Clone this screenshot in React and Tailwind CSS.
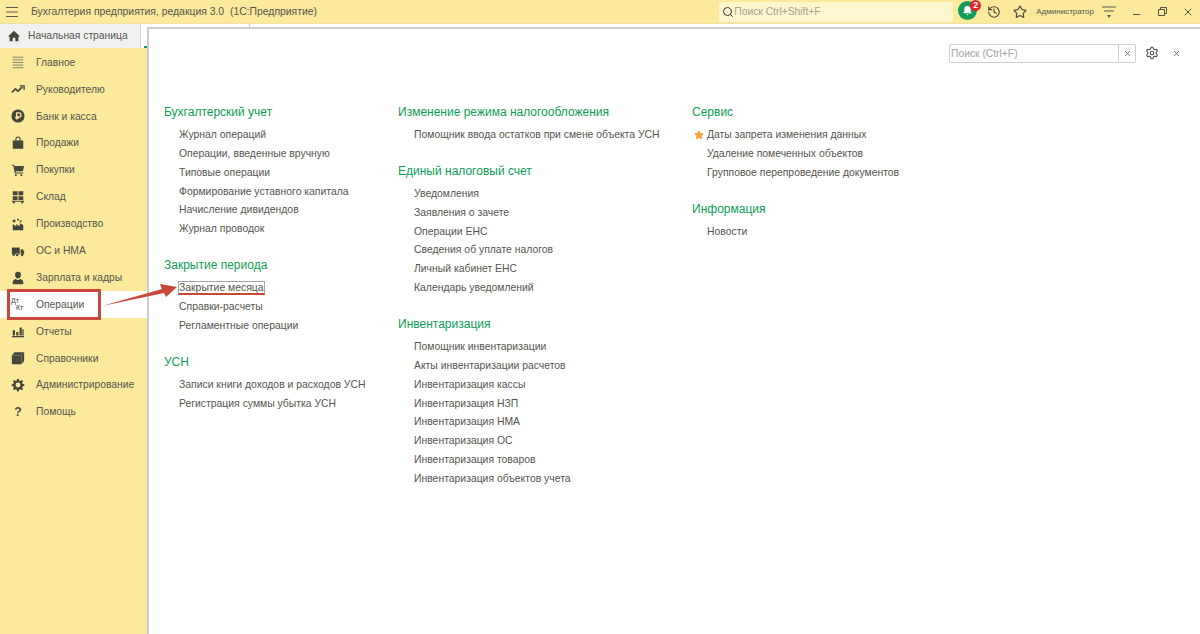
import { Search, History, Star, X, Settings } from "lucide-react"

const menu = [
  { label: "Главное", icon: "lines" },
  { label: "Руководителю", icon: "trend" },
  { label: "Банк и касса", icon: "rub" },
  { label: "Продажи", icon: "bag" },
  { label: "Покупки", icon: "cart" },
  { label: "Склад", icon: "stock" },
  { label: "Производство", icon: "factory" },
  { label: "ОС и НМА", icon: "truck" },
  { label: "Зарплата и кадры", icon: "user" },
  { label: "Операции", icon: "dtkt", active: true },
  { label: "Отчеты", icon: "bars" },
  { label: "Справочники", icon: "book" },
  { label: "Администрирование", icon: "gear" },
  { label: "Помощь", icon: "help" },
]

const columns = [
  {
    width: "w-[234px]",
    indent: "pl-[15px]",
    groups: [
      { title: "Бухгалтерский учет", items: ["Журнал операций", "Операции, введенные вручную", "Типовые операции", "Формирование уставного капитала", "Начисление дивидендов", "Журнал проводок"] },
      { title: "Закрытие периода", items: ["Закрытие месяца", "Справки-расчеты", "Регламентные операции"] },
      { title: "УСН", items: ["Записи книги доходов и расходов УСН", "Регистрация суммы убытка УСН"] },
    ],
  },
  {
    width: "w-[294px]",
    indent: "pl-[16px]",
    groups: [
      { title: "Изменение режима налогообложения", items: ["Помощник ввода остатков при смене объекта УСН"] },
      { title: "Единый налоговый счет", items: ["Уведомления", "Заявления о зачете", "Операции ЕНС", "Сведения об уплате налогов", "Личный кабинет ЕНС", "Календарь уведомлений"] },
      { title: "Инвентаризация", items: ["Помощник инвентаризации", "Акты инвентаризации расчетов", "Инвентаризация кассы", "Инвентаризация НЗП", "Инвентаризация НМА", "Инвентаризация ОС", "Инвентаризация товаров", "Инвентаризация объектов учета"] },
    ],
  },
  {
    width: "w-[300px]",
    indent: "pl-[15px]",
    groups: [
      { title: "Сервис", items: ["Даты запрета изменения данных", "Удаление помеченных объектов", "Групповое перепроведение документов"] },
      { title: "Информация", items: ["Новости"] },
    ],
  },
]

const iconPaths = {
  bag: "M2 5h12v9.500H2zM5 5V3.500a3 3 0 0 1 6 0V5H9.800V3.500a1.800 1.800 0 0 0-3.600 0V5z",
  cart: "M1 2h2.600l.4 1.500h11l-1.500 6H5.200l.3 1.300h8.300V12H4.400L2.700 3.200H1zM4.500 12.800h2v2h-2zM10.800 12.800h2v2h-2z",
  stock: "M2 1.500h5.500V6H2zM8.500 1.500H14V6H8.500zM2 7h5.500v4.500H2zM8.500 7H14v4.500H8.500zM1 12.300h14v1.200H1zM2 13.500h2.500V15H2zM11.500 13.500H14V15h-2.500z",
  factory: "M2 15V8l4 2.600V8l4 2.600V7l4 2v6zM2 3h3v3H2zM7 2h2v2H7zM10 4h2v2h-2z",
  truck: "M1 4h9v8H8.800a1.900 1.900 0 0 0-3.600 0H1zM11 6h2.500L15 8.500V12h-.7a1.900 1.900 0 0 0-3.300-.4zM7 11.200a1.400 1.400 0 1 1 0 2.800 1.400 1.400 0 0 1 0-2.800zM12.700 11.200a1.400 1.400 0 1 1 0 2.800 1.400 1.400 0 0 1 0-2.800zM3 11.600a1.200 1.200 0 1 1 0 2.400 1.200 1.200 0 0 1 0-2.400z",
  user: "M8 1a3.300 3.300 0 0 1 3.300 3.500c0 2-1.400 4-3.300 4S4.700 6.500 4.700 4.500A3.300 3.300 0 0 1 8 1zM2 15v-2.500C2 10.500 4 9.500 5.600 9.200 6.300 9.900 7.100 10.200 8 10.200s1.700-.3 2.400-1C12 9.500 14 10.500 14 12.500V15z",
  bars: "M2 7h2.500v6H2zM6 9h2.500v4H6zM9.800 4h2.500v9H9.800zM13 6h1.500v7H13zM1 13.800h14V15H1z",
  gear: "M7 1h2l.4 2 1.300.5 1.700-1.100 1.400 1.400-1.100 1.700.5 1.300 2 .4v2l-2 .4-.5 1.300 1.100 1.700-1.400 1.400-1.700-1.100-1.300.5-.4 2H7l-.4-2-1.300-.5-1.700 1.100-1.400-1.400 1.100-1.700-.5-1.300-2-.4V7l2-.4.5-1.300-1.100-1.700 1.400-1.400 1.700 1.100 1.300-.5zM8 5.200a2.800 2.800 0 1 0 0 5.600 2.800 2.800 0 0 0 0-5.600z",
}

function MenuIcon({ name }) {
  const cls = "w-[14px] h-[14px]"
  if (iconPaths[name]) {
    return (
      <svg viewBox="0 0 16 16" className={cls} fill="#45453c" fillRule="evenodd">
        <path d={iconPaths[name]} />
      </svg>
    )
  }
  if (name === "lines") {
    return (
      <svg viewBox="0 0 16 16" className={cls}>
        <path d="M2 2.500h12M2 5.500h12M2 8.500h12M2 11.500h12M2 14.500h12" stroke="#77776a" strokeWidth="1" />
      </svg>
    )
  }
  if (name === "trend") {
    return (
      <svg viewBox="0 0 16 16" className={cls} fill="none" stroke="#45453c" strokeWidth="2">
        <path d="M1 12l4-4 3 2.500 5-5" />
        <path d="M10 4.500h5V9" strokeWidth="1.500" />
      </svg>
    )
  }
  if (name === "rub") {
    return (
      <svg viewBox="0 0 16 16" className={cls}>
        <circle cx="8" cy="8" r="7.500" fill="#45453c" />
        <path d="M6.500 12V4.500h2.700a2 2 0 0 1 0 4.500H5M5 10.500h4" fill="none" stroke="#fbe99c" strokeWidth="1.500" />
      </svg>
    )
  }
  if (name === "book") {
    return (
      <svg viewBox="0 0 16 16" className={cls} fill="#45453c">
        <path d="M1 5l3-3.500h11v10L12 15H1z" />
        <path d="M12 5v10M1 5h11l3-3.500" fill="none" stroke="#8d8d7c" strokeWidth="0.700" />
      </svg>
    )
  }
  if (name === "dtkt") {
    return (
      <span className="flex flex-col w-[14px] text-[#45453c] text-[7px] leading-[7px]">
        <span>Дт</span>
        <span className="ml-[5px]">Кт</span>
      </span>
    )
  }
  return <span className="w-[16px] font-bold text-[#45453c] text-[12px] text-center">?</span>
}

function LinkItem({ text }) {
  if (text === "Закрытие месяца") {
    return (
      <div className="flex items-center h-[18.850px]">
        <span className="-ml-[1px] border border-[#a3a3a3] border-b-2 border-b-[#c8483a] h-[14px] leading-[12px]">{text}</span>
      </div>
    )
  }
  return (
    <div className="relative flex items-center h-[18.850px]">
      {text === "Даты запрета изменения данных" && (
        <Star className="top-[4px] -left-[13px] absolute w-[10px] h-[10px] text-[#f2a33a]" fill="#f2a33a" />
      )}
      {text}
    </div>
  )
}

export default function App() {
  return (
    <div className="relative flex flex-col bg-white w-[1200px] h-[634px] overflow-hidden font-['Liberation_Sans',Arial,sans-serif] text-[#555550]">
      {/* верхняя панель */}
      <div className="flex items-center bg-[#fbe99c] pr-[6px] border-[#efe2a4] border-b w-full h-[24px] shrink-0">
        <svg viewBox="0 0 12 10" className="ml-[6px] w-[12px] h-[10px]">
          <path d="M0 .5h12M0 5h12M0 9.500h12" stroke="#5b5b4d" strokeWidth="1" />
        </svg>
        <span className="ml-[13px] text-[10.400px]">Бухгалтерия предприятия, редакция 3.0&nbsp; (1С:Предприятие)</span>
        <div className="flex items-center bg-[#fdf6cf] ml-auto pl-[3px] rounded-[2px] w-[234px] h-[20px] text-[#a8a48a] text-[10.300px]">
          <Search className="w-[12px] h-[12px] text-[#333]" strokeWidth={2} />
          Поиск Ctrl+Shift+F
        </div>
        <div className="relative flex justify-center items-center bg-[#0f9d58] mb-[2px] ml-[5px] rounded-full w-[19px] h-[19px]">
          <svg viewBox="0 0 12 12" className="w-[11px] h-[11px]" fill="white">
            <path d="M6 1a3.500 3.500 0 0 1 3.500 3.500V7L11 9H1l1.500-2V4.500A3.500 3.500 0 0 1 6 1zM4.800 10h2.400L6 11.500z" />
          </svg>
          <span className="top-[-1px] right-[-4px] absolute flex justify-center items-center bg-[#e3262e] rounded-full w-[11px] h-[11px] font-bold text-[9px] text-white leading-none">2</span>
        </div>
        <History className="ml-[10px] w-[14px] h-[14px] text-[#4b4b40]" />
        <Star className="ml-[12px] w-[14px] h-[14px] text-[#4b4b40]" />
        <span className="ml-[9px] text-[8px]">Администратор</span>
        <svg viewBox="0 0 14 12" className="ml-[8px] w-[14px] h-[12px]">
          <path d="M0 1h14M2 5h10" stroke="#5b5b4d" strokeWidth="1" />
          <path d="M5 9h4l-2 3z" fill="#5b5b4d" />
        </svg>
        <div className="bg-[#55554a] mt-[6px] ml-[17px] w-[7px] h-px" />
        <svg viewBox="0 0 9 9" className="ml-[18px] w-[9px] h-[9px]" fill="none" stroke="#55554a">
          <path d="M.5 2.500h6v6h-6zM2.500 2.500v-2h6v6h-2" />
        </svg>
        <X className="ml-[15px] w-[12px] h-[12px] text-[#55554a]" />
      </div>

      <div className="flex flex-1 min-h-0">
        {/* боковое меню */}
        <div className="flex flex-col w-[147px] shrink-0">
          <div className="flex h-[24px] shrink-0">
            <div className="flex items-center bg-[#f1f1f1] pl-[7px] w-[140px] text-[10.300px]">
              <svg viewBox="0 0 16 16" className="mr-[7px] w-[14px] h-[14px]" fill="#45453c">
                <path d="M8 2l7 6.500h-2V14H9.500v-4h-3v4H3V8.500H1z" />
              </svg>
              Начальная страница
            </div>
            <div className="flex-1 border-[#d6d6d6] border-l">
              <div className="bg-[#0f9d58] mt-[21.500px] ml-[3px] w-[3px] h-[2px]" />
            </div>
          </div>
          <div className="flex flex-col flex-1 bg-[#fbe99c] pt-[1px]">
            {menu.map((m) => (
              <div
                key={m.label}
                className={`relative flex items-center pl-[10px] h-[26.900px] text-[10.300px] ${m.active ? "bg-white" : ""}`}
              >
                <span className="flex justify-center items-center mr-[10px] w-[16px] h-[16px]">
                  <MenuIcon name={m.icon} />
                </span>
                {m.label}
                {m.active && (
                  <span className="top-[-2px] left-[7px] absolute border-[#c8483a] border-[3px] w-[94px] h-[31px]" />
                )}
              </div>
            ))}
          </div>
        </div>

        {/* содержимое раздела */}
        <div className="flex flex-col flex-1 min-w-0">
          <div className="flex h-[3px] shrink-0">
            <div className="border-[#d0d0d0] border-r w-[103px]" />
          </div>
          <div className="flex-1 border-[#cdcdcd] border-t-2 border-l-2 min-h-0">
            <div className="flex justify-end items-start pt-[15px] pr-[19.500px] h-[56px]">
              <div className="flex items-center border border-[#cfcfcf] rounded-[2px] w-[187px] h-[19px] text-[10.300px]">
                <span className="flex-1 pl-[1px] text-[#a3a3a3]">Поиск (Ctrl+F)</span>
                <span className="flex justify-center items-center border-[#cfcfcf] border-l w-[17px] h-full">
                  <X className="w-[9px] h-[9px] text-[#555]" />
                </span>
              </div>
              <Settings className="mt-[2px] ml-[9px] w-[14px] h-[14px] text-[#555]" />
              <X className="mt-[5px] ml-[12.500px] w-[9px] h-[9px] text-[#555]" />
            </div>
            <div className="flex pt-[18px] pl-[15px] text-[10.400px]">
              {columns.map((col) => (
                <div key={col.width} className={`flex flex-col gap-[17.500px] ${col.width}`}>
                  {col.groups.map((g) => (
                    <div key={g.title}>
                      <div className="mb-[4.500px] h-[18px] text-[#0d9d58] text-[12px] leading-[18px]">{g.title}</div>
                      <div className={`flex flex-col ${col.indent}`}>
                        {g.items.map((t) => (
                          <LinkItem key={t} text={t} />
                        ))}
                      </div>
                    </div>
                  ))}
                </div>
              ))}
            </div>
          </div>
        </div>
      </div>

      {/* красная стрелка поверх меню и списка */}
      <svg className="top-[280px] left-[100px] absolute w-[80px] h-[30px]" viewBox="0 0 80 30">
        <path d="M2 26L62 9l-2-5 17 3-11 10-2-4z" fill="#c8483a" />
      </svg>
    </div>
  )
}
